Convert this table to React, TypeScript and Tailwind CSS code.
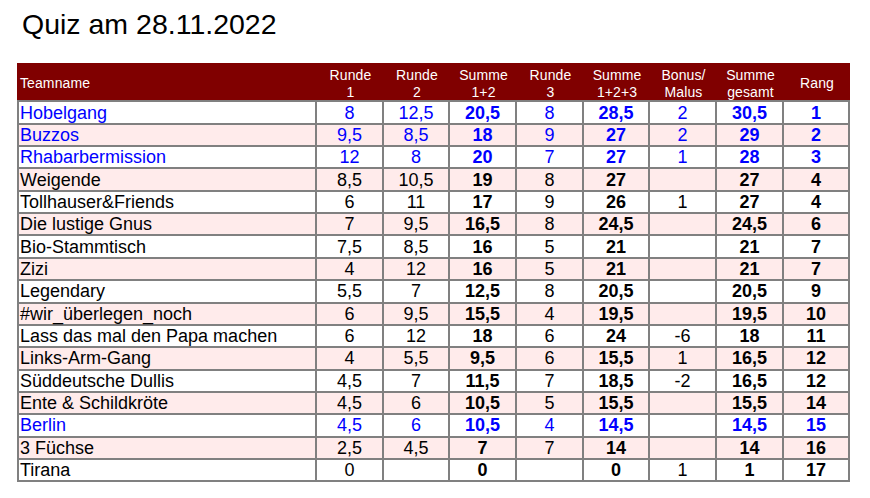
import React from "react";

type Row = {
  name: string;
  vals: string[];
  blue?: boolean;
};

const rows: Row[] = [
  { name: "Hobelgang", vals: ["8", "12,5", "20,5", "8", "28,5", "2", "30,5", "1"], blue: true },
  { name: "Buzzos", vals: ["9,5", "8,5", "18", "9", "27", "2", "29", "2"], blue: true },
  { name: "Rhabarbermission", vals: ["12", "8", "20", "7", "27", "1", "28", "3"], blue: true },
  { name: "Weigende", vals: ["8,5", "10,5", "19", "8", "27", "", "27", "4"] },
  { name: "Tollhauser&Friends", vals: ["6", "11", "17", "9", "26", "1", "27", "4"] },
  { name: "Die lustige Gnus", vals: ["7", "9,5", "16,5", "8", "24,5", "", "24,5", "6"] },
  { name: "Bio-Stammtisch", vals: ["7,5", "8,5", "16", "5", "21", "", "21", "7"] },
  { name: "Zizi", vals: ["4", "12", "16", "5", "21", "", "21", "7"] },
  { name: "Legendary", vals: ["5,5", "7", "12,5", "8", "20,5", "", "20,5", "9"] },
  { name: "#wir_überlegen_noch", vals: ["6", "9,5", "15,5", "4", "19,5", "", "19,5", "10"] },
  { name: "Lass das mal den Papa machen", vals: ["6", "12", "18", "6", "24", "-6", "18", "11"] },
  { name: "Links-Arm-Gang", vals: ["4", "5,5", "9,5", "6", "15,5", "1", "16,5", "12"] },
  { name: "Süddeutsche Dullis", vals: ["4,5", "7", "11,5", "7", "18,5", "-2", "16,5", "12"] },
  { name: "Ente & Schildkröte", vals: ["4,5", "6", "10,5", "5", "15,5", "", "15,5", "14"] },
  { name: "Berlin", vals: ["4,5", "6", "10,5", "4", "14,5", "", "14,5", "15"], blue: true },
  { name: "3 Füchse", vals: ["2,5", "4,5", "7", "7", "14", "", "14", "16"] },
  { name: "Tirana", vals: ["0", "", "0", "", "0", "1", "1", "17"] },
];

// columns that are printed bold (Summe 1+2, Summe 1+2+3, Summe gesamt, Rang)
const boldCols = [2, 4, 6, 7];

const headers: { top: string; bottom?: string; width: string }[] = [
  { top: "Runde", bottom: "1", width: "w-[67px]" },
  { top: "Runde", bottom: "2", width: "w-[66px]" },
  { top: "Summe", bottom: "1+2", width: "w-[67px]" },
  { top: "Runde", bottom: "3", width: "w-[67px]" },
  { top: "Summe", bottom: "1+2+3", width: "w-[66px]" },
  { top: "Bonus/", bottom: "Malus", width: "w-[67px]" },
  { top: "Summe", bottom: "gesamt", width: "w-[67px]" },
  { top: "Rang", width: "w-[66px]" },
];

export default function App() {
  return (
    <div className="w-[870px] h-[498px] bg-white text-black font-['Liberation_Sans',Arial,sans-serif] pt-[8px]">
      <h1 className="pl-[22px] text-[28.5px] leading-[32px] font-normal">Quiz am 28.11.2022</h1>

      <table className="ml-[17px] mt-[23px] w-[833px] table-fixed border-separate border-spacing-0">
        <thead>
          <tr className="bg-[#800000] text-white text-[14px] leading-[16.7px] tracking-[0.1px]">
            <th className="w-[300px] h-[38px] pl-[3px] pt-[4px] text-left font-normal align-middle border-b-2 border-[#808080]">
              Teamname
            </th>
            {headers.map((h, i) => (
              <th
                key={i}
                className={`${h.width} h-[38px] pt-[4px] text-center font-normal align-middle border-b-2 border-[#808080]`}>
                {h.top}
                {h.bottom && (
                  <>
                    <br />
                    {h.bottom}
                  </>
                )}
              </th>
            ))}
          </tr>
        </thead>
        <tbody className="text-[18px] leading-[18px]">
          {rows.map((r, ri) => (
            <tr
              key={ri}
              className={`${ri % 2 === 1 ? "bg-[#ffebeb]" : "bg-white"} ${r.blue ? "text-[#0000ff]" : "text-black"}`}>
              <td className="h-[22.35px] p-0 pl-[1px] border-l-2 border-r-2 border-b-2 border-[#808080] whitespace-nowrap align-middle">
                {r.name}
              </td>
              {r.vals.map((v, ci) => (
                <td
                  key={ci}
                  className={`h-[22.35px] p-0 text-center align-middle border-r-2 border-b-2 border-[#808080] ${
                    boldCols.includes(ci) ? "font-bold" : ""
                  }`}>
                  {v}
                </td>
              ))}
            </tr>
          ))}
        </tbody>
      </table>
    </div>
  );
}
